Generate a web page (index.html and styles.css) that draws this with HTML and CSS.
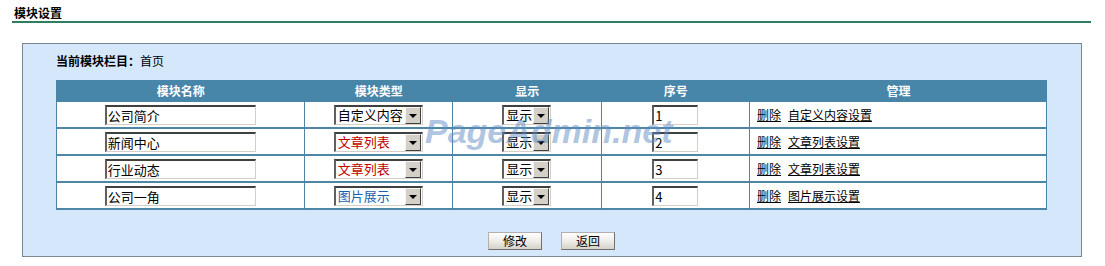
FILE: index.html
```html
<!DOCTYPE html>
<html lang="zh-CN">
<head>
<meta charset="utf-8">
<title>模块设置</title>
<link rel="stylesheet" href="styles.css">
</head>
<body>
<div class="page-title">模块设置</div>
<div class="panel">
  <div class="current"><b>当前模块栏目：</b>首页</div>
  <div class="table-wrap">
    <table class="grid">
      <colgroup>
        <col class="c1"><col class="c2"><col class="c3"><col class="c4"><col class="c5">
      </colgroup>
      <thead>
        <tr><th>模块名称</th><th>模块类型</th><th>显示</th><th>序号</th><th>管理</th></tr>
      </thead>
      <tbody>
        <tr>
          <td class="center"><input class="txt name" type="text" value="公司简介"></td>
          <td class="center"><span class="sel type"><select><option>自定义内容</option></select><span class="arrow"></span></span></td>
          <td class="center"><span class="sel show"><select><option>显示</option></select><span class="arrow"></span></span></td>
          <td class="center"><input class="txt seq" type="text" value="1"></td>
          <td class="manage"><a href="#">删除</a><a href="#">自定义内容设置</a></td>
        </tr>
        <tr>
          <td class="center"><input class="txt name" type="text" value="新闻中心"></td>
          <td class="center"><span class="sel type red"><select><option>文章列表</option></select><span class="arrow"></span></span></td>
          <td class="center"><span class="sel show"><select><option>显示</option></select><span class="arrow"></span></span></td>
          <td class="center"><input class="txt seq" type="text" value="2"></td>
          <td class="manage"><a href="#">删除</a><a href="#">文章列表设置</a></td>
        </tr>
        <tr>
          <td class="center"><input class="txt name" type="text" value="行业动态"></td>
          <td class="center"><span class="sel type red"><select><option>文章列表</option></select><span class="arrow"></span></span></td>
          <td class="center"><span class="sel show"><select><option>显示</option></select><span class="arrow"></span></span></td>
          <td class="center"><input class="txt seq" type="text" value="3"></td>
          <td class="manage"><a href="#">删除</a><a href="#">文章列表设置</a></td>
        </tr>
        <tr>
          <td class="center"><input class="txt name" type="text" value="公司一角"></td>
          <td class="center"><span class="sel type blue"><select><option>图片展示</option></select><span class="arrow"></span></span></td>
          <td class="center"><span class="sel show"><select><option>显示</option></select><span class="arrow"></span></span></td>
          <td class="center"><input class="txt seq" type="text" value="4"></td>
          <td class="manage"><a href="#">删除</a><a href="#">图片展示设置</a></td>
        </tr>
      </tbody>
    </table>
    <div class="watermark">PageAdmin.net</div>
  </div>
  <div class="actions">
    <button class="btn" type="button">修改</button>
    <button class="btn" type="button">返回</button>
  </div>
</div>
</body>
</html>
```
FILE: styles.css
```css
html, body {
  margin: 0;
  padding: 0;
  background: #ffffff;
}
body {
  font-family: "Noto Sans CJK SC", "DejaVu Sans", sans-serif;
  font-size: 12px;
  color: #000;
}
.page-title {
  margin: 0 14px 0 12px;
  padding: 6px 0 1px 2px;
  line-height: 14px;
  font-weight: bold;
  border-bottom: 2px solid #2f7d62;
}
.panel {
  margin: 20px 23px 0 22px;
  border: 1px solid #7d8790;
  background: #d5e8fb;
  padding: 10px 34px 6px 33px;
}
.current {
  line-height: 14px;
  height: 14px;
}
.current b {
  font-weight: bold;
}
.table-wrap {
  position: relative;
  margin-top: 12px;
}
.grid {
  width: 100%;
  table-layout: fixed;
  border-collapse: separate;
  border-spacing: 0;
  background: #fff;
  border-left: 1px solid #4d84a3;
}
.c1 { width: 25%; }
.c2 { width: 15%; }
.c3 { width: 15%; }
.c4 { width: 15%; }
.c5 { width: 30%; }
.grid th {
  background: #4886a9;
  color: #fff;
  font-weight: bold;
  height: 22px;
  padding: 0;
  line-height: 22px;
  text-align: center;
}
.grid td {
  height: 25px;
  padding: 0;
  border-right: 1px solid #4d84a3;
  border-bottom: 2px solid #4e87a6;
  vertical-align: middle;
}
.grid td.center {
  text-align: center;
}
.grid td.manage {
  padding-left: 7px;
}
.manage a {
  color: #000;
  text-decoration: underline;
  margin-right: 7px;
}
.txt {
  box-sizing: border-box;
  height: 20px;
  font-family: "Noto Sans CJK SC", "DejaVu Sans", sans-serif;
  font-size: 13px;
  padding: 0 1px;
  margin: 0;
  vertical-align: middle;
  border-style: solid;
  border-width: 2px 1px 1px 2px;
  border-color: #404040 #d4d0c8 #d4d0c8 #606060;
  background: #fff;
  color: #000;
  line-height: 16px;
}
.txt.name { width: 151px; }
.txt.seq { width: 46px; }
.sel {
  position: relative;
  display: inline-block;
  vertical-align: middle;
  height: 20px;
}
.sel.type { width: 89px; }
.sel.show { width: 49px; }
.sel select {
  -webkit-appearance: none;
  appearance: none;
  box-sizing: border-box;
  width: 100%;
  height: 20px;
  margin: 0;
  padding: 0 0 0 2px;
  font-family: "Noto Sans CJK SC", "DejaVu Sans", sans-serif;
  font-size: 13px;
  line-height: 16px;
  color: #000;
  background: #fff;
  border-style: solid;
  border-width: 2px 1px 1px 2px;
  border-color: #404040 #d4d0c8 #d4d0c8 #606060;
  border-radius: 0;
}
.sel.red select { color: #c00000; }
.sel.blue select { color: #1a5fb0; }
.sel .arrow {
  position: absolute;
  right: 2px;
  top: 2px;
  width: 14px;
  height: 15px;
  background: #d4d0c8;
  border-style: solid;
  border-width: 1px;
  border-color: #f4f4f4 #404040 #404040 #f4f4f4;
  pointer-events: none;
}
.sel .arrow::after {
  content: "";
  position: absolute;
  left: 3px;
  top: 6px;
  border-left: 4px solid transparent;
  border-right: 4px solid transparent;
  border-top: 4px solid #000;
}
.watermark {
  position: absolute;
  left: 369px;
  top: 33px;
  font-family: "Liberation Sans", Arial, sans-serif;
  font-size: 34px;
  font-weight: bold;
  font-style: italic;
  letter-spacing: 0;
  color: rgba(95, 140, 195, 0.5);
  pointer-events: none;
  line-height: 36px;
}
.actions {
  margin-top: 22px;
  display: flex;
  justify-content: center;
  gap: 19px;
}
.btn {
  box-sizing: border-box;
  width: 54px;
  height: 18px;
  margin: 0;
  padding: 0;
  font-family: "Noto Sans CJK SC", "DejaVu Sans", sans-serif;
  font-size: 12px;
  line-height: 14px;
  color: #000;
  border: 1px solid #8a8a8a;
  border-color: #b0b0b0 #707070 #707070 #b0b0b0;
  background: linear-gradient(to bottom, #ffffff 0%, #ecebe6 55%, #d6d2c8 100%);
  border-radius: 0;
}
```
